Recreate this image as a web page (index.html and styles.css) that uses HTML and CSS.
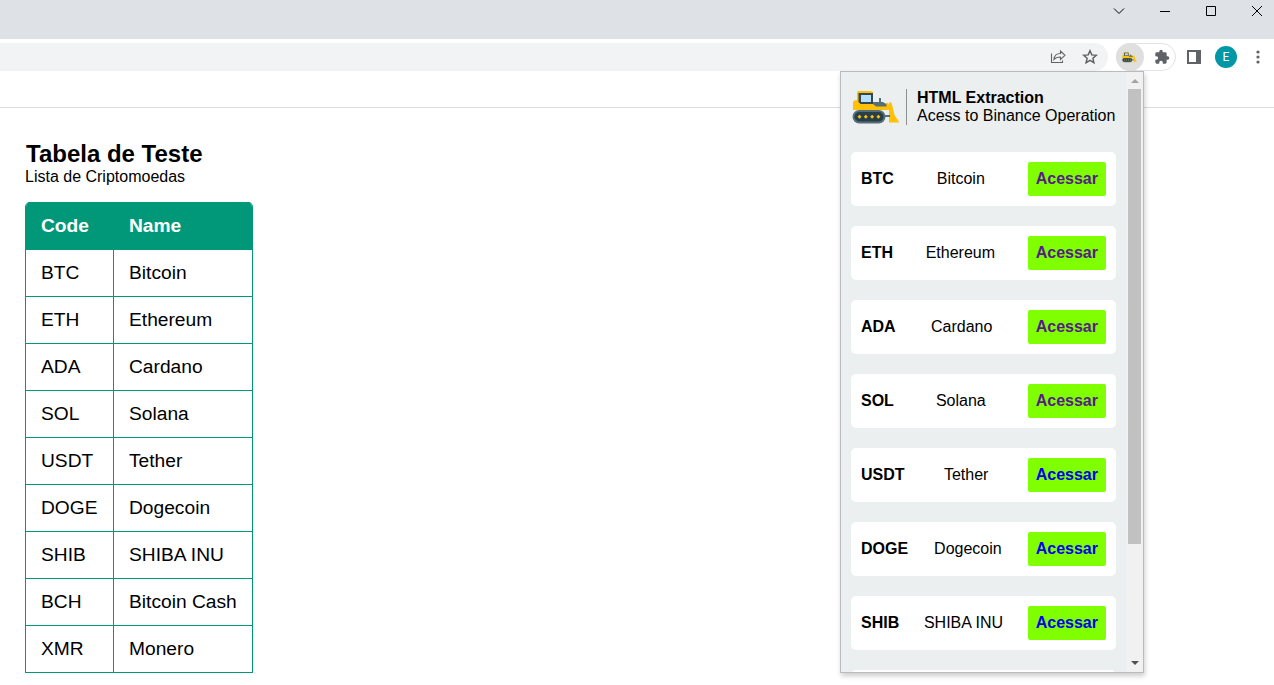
FILE: index.html
```html
<!DOCTYPE html>
<html lang="pt-BR">
<head>
<meta charset="utf-8">
<title>Tabela de Teste</title>
<link rel="stylesheet" href="styles.css">
</head>
<body>
<svg class="defs" aria-hidden="true">
  <symbol id="dozer" viewBox="0 0 48 36">
    <path fill="#ffc107" d="M5 3.500Q5 2 6.500 2h13Q21 2 21 3.500V14h14q2 0 2 2v5H1v-7q0-3 4-3z"/>
    <path fill="#ffc107" d="M37 13.500h2.500l3 12.500 5 7.500H37z"/>
    <path fill="#37474f" d="M6.500 4H21v11H8.500L6.500 13z"/>
    <path fill="#b3e0fc" d="M9 6h10v7H9z"/>
    <path fill="#546e7a" d="M21 13h10l3.500 2.500v2H24L21 15zM27 9h2v4.500h-2zM32 26h6v2h-6z"/>
    <rect x="0.500" y="21" width="33" height="13.500" rx="6.700" fill="#546e7a"/>
    <rect x="2.500" y="23" width="29" height="9.500" rx="4.700" fill="#263f49"/>
    <path fill="#ffc107" d="M7.500 25.700l2 2-2 2-2-2zM13.800 25.700l2 2-2 2-2-2zM20.100 25.700l2 2-2 2-2-2zM26.400 25.700l2 2-2 2-2-2z"/>
  </symbol>
</svg>
<header class="titlebar">
  <svg class="win" viewBox="0 0 12 12"><path d="M1 3.500l5 5 5-5"/></svg>
  <svg class="win" viewBox="0 0 12 12"><path d="M1 6.500h10"/></svg>
  <svg class="win" viewBox="0 0 12 12"><path d="M1.500 1.500h9v9h-9z"/></svg>
  <svg class="win" viewBox="0 0 12 12"><path d="M1 1l10 10M11 1L1 11"/></svg>
</header>
<div class="toolbar">
  <div class="omnibox">
    <svg class="share" viewBox="0 0 16 16"><path d="M1.500 4.500v9h11v-2M4 10.500c.3-4 2.500-6 6.500-6V2L15 6.300l-4.500 4.200V8C7.500 8 5.500 8.700 4 10.500z"/></svg>
    <svg class="star" viewBox="0 0 16 16"><path d="M8 1.800l1.800 4.100 4.500.4-3.400 3 1 4.400L8 11.400l-3.900 2.300 1-4.400-3.400-3 4.500-.4z"/></svg>
  </div>
  <div class="extensions">
    <span class="active"><svg class="mini"><use href="#dozer"/></svg></span>
    <svg class="puzzle" viewBox="0 0 24 24"><path d="M20.500 11H19V7a2 2 0 0 0-2-2h-4V3.500a2.500 2.500 0 0 0-5 0V5H4a2 2 0 0 0-2 2v3.800h1.500a2.700 2.700 0 0 1 0 5.400H2V20a2 2 0 0 0 2 2h3.800v-1.500a2.700 2.700 0 0 1 5.400 0V22H17a2 2 0 0 0 2-2v-4h1.500a2.500 2.500 0 0 0 0-5z"/></svg>
  </div>
  <svg class="panel" viewBox="0 0 14 14"><path d="M0 0h14v14H0zM2 2v10h7V2z" fill-rule="evenodd"/></svg>
  <span class="avatar">E</span>
  <svg class="dots" viewBox="0 0 4 14"><circle cx="2" cy="2" r="1.600"/><circle cx="2" cy="7" r="1.600"/><circle cx="2" cy="12" r="1.600"/></svg>
</div>
<div class="bookmarks"></div>
<main class="page">
  <h1>Tabela de Teste</h1>
  <p class="subtitle">Lista de Criptomoedas</p>
  <div class="table">
    <div class="row head"><span>Code</span><span>Name</span></div>
    <div class="row"><span>BTC</span><span>Bitcoin</span></div>
    <div class="row"><span>ETH</span><span>Ethereum</span></div>
    <div class="row"><span>ADA</span><span>Cardano</span></div>
    <div class="row"><span>SOL</span><span>Solana</span></div>
    <div class="row"><span>USDT</span><span>Tether</span></div>
    <div class="row"><span>DOGE</span><span>Dogecoin</span></div>
    <div class="row"><span>SHIB</span><span>SHIBA INU</span></div>
    <div class="row"><span>BCH</span><span>Bitcoin Cash</span></div>
    <div class="row"><span>XMR</span><span>Monero</span></div>
  </div>
</main>
<aside class="popup">
  <div class="content">
    <div class="brand">
      <svg class="logo"><use href="#dozer"/></svg>
      <div class="brand-text"><b>HTML Extraction</b><span>Acess to Binance Operation</span></div>
    </div>
    <div class="card"><b>BTC</b><span>Bitcoin</span><a class="btn visited">Acessar</a></div>
    <div class="card"><b>ETH</b><span>Ethereum</span><a class="btn visited">Acessar</a></div>
    <div class="card"><b>ADA</b><span>Cardano</span><a class="btn visited">Acessar</a></div>
    <div class="card"><b>SOL</b><span>Solana</span><a class="btn visited">Acessar</a></div>
    <div class="card"><b>USDT</b><span>Tether</span><a class="btn">Acessar</a></div>
    <div class="card"><b>DOGE</b><span>Dogecoin</span><a class="btn">Acessar</a></div>
    <div class="card"><b>SHIB</b><span>SHIBA INU</span><a class="btn">Acessar</a></div>
    <div class="card"></div>
  </div>
  <div class="scrollbar">
    <svg class="arrow up" viewBox="0 0 8 4"><path d="M0 4l4-4 4 4z"/></svg>
    <div class="thumb"></div>
    <svg class="arrow down" viewBox="0 0 8 4"><path d="M0 0l4 4 4-4z"/></svg>
  </div>
</aside>
</body>
</html>
```
FILE: styles.css
```css
* { box-sizing: border-box; }
body {
  margin: 0;
  width: 1274px;
  height: 685px;
  overflow: hidden;
  position: relative;
  background: #fff;
  color: #000;
  font: 16px/18px "Liberation Sans", Arial, sans-serif;
}
svg { display: block; flex: none; }
.defs { width: 0; height: 0; position: absolute; }

.titlebar {
  height: 39px;
  background: #dee1e6;
  display: flex;
  justify-content: flex-end;
  gap: 34px;
  padding: 5px 11px 0 0;
}
.win { width: 12px; height: 12px; fill: none; stroke: #000; stroke-width: 1; }

.toolbar { height: 36px; display: flex; align-items: center; }
.omnibox {
  width: 1108px;
  height: 28px;
  background: #f1f3f4;
  border-radius: 0 14px 14px 0;
  display: flex;
  align-items: center;
  justify-content: flex-end;
  gap: 16px;
  padding-right: 10px;
}
.share, .star { width: 16px; height: 16px; fill: none; stroke: #5f6368; stroke-width: 1.1; }
.star { stroke-width: 1.5; }
.extensions {
  width: 60px;
  height: 28px;
  margin-left: 8px;
  border: 1px solid #e1e3e6;
  border-radius: 14px;
  display: flex;
  align-items: center;
}
.active {
  width: 28px;
  height: 28px;
  margin-left: -1px;
  border-radius: 50%;
  background: #dfdfdf;
  display: flex;
  align-items: center;
  justify-content: center;
}
.mini { width: 15px; height: 12px; margin-right: 2px; }
.puzzle { width: 16px; height: 16px; margin-left: 10px; fill: #5f6368; }
.panel { width: 14px; height: 14px; margin-left: 11px; fill: #5f6368; }
.avatar {
  width: 22px;
  height: 22px;
  margin-left: 14px;
  border-radius: 50%;
  background: #0097a7;
  color: #fff;
  font: 12px/22px Roboto, sans-serif;
  text-align: center;
}
.dots { width: 4px; height: 14px; margin-left: 19px; fill: #5f6368; }
.bookmarks { height: 33px; border-bottom: 1px solid #dadce0; }

.page { padding: 32px 0 0 25px; }
h1 { margin: 0; padding-left: 1px; font-size: 24px; line-height: 28px; }
.subtitle { margin: 0 0 16px; line-height: 18px; }
.table {
  width: 228px;
  border: 1px solid #009879;
  border-top: 0;
  border-radius: 5px 5px 0 0;
  overflow: hidden;
  font-size: 19.2px;
}
.row {
  display: grid;
  grid-template-columns: 88px 1fr;
  height: 47px;
  line-height: 45px;
  border-top: 1px solid #009879;
}
.row span { padding-left: 15px; }
.row span:first-child { border-right: 1px solid #009879; }
.head { background: #009879; color: #fff; font-weight: bold; }

.popup {
  position: absolute;
  left: 840px;
  top: 71px;
  width: 304px;
  height: 602px;
  border: 1px solid #b9bbbd;
  box-shadow: 1px 3px 5px rgba(0, 0, 0, .2);
  background: #ebeff0;
  display: flex;
  overflow: hidden;
}
.content {
  width: 285px;
  padding: 17px 10px 0;
  display: flex;
  flex-direction: column;
  gap: 20px;
}
.brand { display: flex; flex: none; height: 43px; margin-bottom: 0; }
.brand { height: 43px; }
.logo { width: 48px; height: 36px; margin-left: 1px; }
.brand-text {
  height: 36px;
  margin-left: 6px;
  padding-left: 10px;
  border-left: 1px solid #8d9091;
  display: flex;
  flex-direction: column;
  white-space: nowrap;
}
.card {
  flex: none;
  height: 54px;
  padding: 10px;
  border-radius: 5px;
  background: #fff;
  display: flex;
  align-items: center;
  justify-content: space-between;
}
.btn {
  padding: 8px;
  border-radius: 2px;
  background: #80ff00;
  color: #0000ee;
  font-weight: bold;
}
.visited { color: #551a8b; }
.scrollbar {
  width: 17px;
  background: #f1f1f1;
  display: flex;
  flex-direction: column;
  align-items: center;
  padding: 7px 0;
}
.arrow { width: 8px; height: 4px; }
.up { fill: #a3a3a3; }
.down { fill: #505050; margin-top: auto; }
.thumb { width: 13px; height: 455px; margin-top: 6px; background: #c1c1c1; }
```
